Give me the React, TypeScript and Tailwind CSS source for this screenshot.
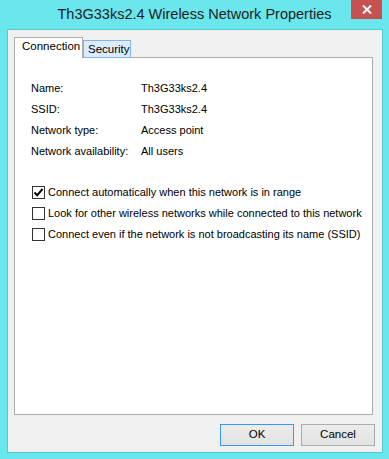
import { useState } from 'react';

const rows = [
  { label: 'Name:', value: 'Th3G33ks2.4' },
  { label: 'SSID:', value: 'Th3G33ks2.4' },
  { label: 'Network type:', value: 'Access point' },
  { label: 'Network availability:', value: 'All users' },
];

const options = [
  { label: 'Connect automatically when this network is in range', checked: true },
  { label: 'Look for other wireless networks while connected to this network', checked: false },
  { label: 'Connect even if the network is not broadcasting its name (SSID)', checked: false },
];

function CheckBox({ checked }: { checked: boolean }) {
  return (
    <span className="w-[13px] h-[13px] border border-[#333333] bg-white flex items-center justify-center shrink-0">
      {checked && (
        <svg width="11" height="11" viewBox="0 0 11 11">
          <path d="M1.5 5.5 L4.2 8.3 L9.5 2" fill="none" stroke="#000" strokeWidth="2" />
        </svg>
      )}
    </span>
  );
}

export default function App() {
  const [tab, setTab] = useState('connection');
  return (
    <div className="w-[389px] h-[459px] bg-[#6ae6ed] relative font-['Liberation_Sans',Arial,sans-serif] text-[11px] text-black">
      <div className="h-[29px] flex items-center justify-center text-[14.5px] text-[#1e1e1e]">
        Th3G33ks2.4 Wireless Network Properties
      </div>
      <button className="absolute top-0 right-[7px] w-[31px] h-[19px] bg-[#c75050] flex items-center justify-center">
        <svg width="10" height="9" viewBox="0 0 10 9">
          <path d="M1 0.5 L9 8.5 M9 0.5 L1 8.5" stroke="#fff" strokeWidth="2" />
        </svg>
      </button>

      <div className="ml-[7px] w-[376px] h-[424px] border border-[#55c8ce] bg-[#f0f0f0] flex flex-col px-[6px] pt-[7px]">
        <div className="flex items-end h-[21px] relative z-10">
          <button
            onClick={() => setTab('connection')}
            className="w-[69px] h-[21px] bg-white border border-b-0 border-[#acacac] text-left pl-[7px] pb-[2px] text-[11.5px]"
          >
            Connection
          </button>
          <button
            onClick={() => setTab('security')}
            className="w-[48px] h-[18px] bg-[#dcecfc] border border-[#7eb4ea] text-left pl-[4px] leading-[16px] text-[11.5px]"
          >
            Security
          </button>
        </div>
        <div className="-mt-[1px] w-[359px] h-[358px] border border-[#acacac] bg-white pl-[16px] pt-[20px]">
          {tab === 'connection' && (
            <>
              {rows.map((r) => (
                <div key={r.label} className="flex h-[21px] items-center whitespace-nowrap">
                  <span className="w-[110px]">{r.label}</span>
                  <span>{r.value}</span>
                </div>
              ))}
              <div className="mt-[20px] ml-[1px]">
                {options.map((o) => (
                  <label key={o.label} className="flex h-[21px] items-center gap-[3px]">
                    <CheckBox checked={o.checked} />
                    <span className="whitespace-nowrap">{o.label}</span>
                  </label>
                ))}
              </div>
            </>
          )}
        </div>
        <div className="flex justify-end gap-[7px] mt-[9px] mr-[1px]">
          <button className="w-[74px] h-[22px] border border-[#3399ff] bg-gradient-to-b from-[#ececec] to-[#e2e2e2] text-[11.5px]">
            OK
          </button>
          <button className="w-[74px] h-[22px] border border-[#acacac] bg-gradient-to-b from-[#ececec] to-[#e2e2e2] text-[11.5px]">
            Cancel
          </button>
        </div>
      </div>
    </div>
  );
}
